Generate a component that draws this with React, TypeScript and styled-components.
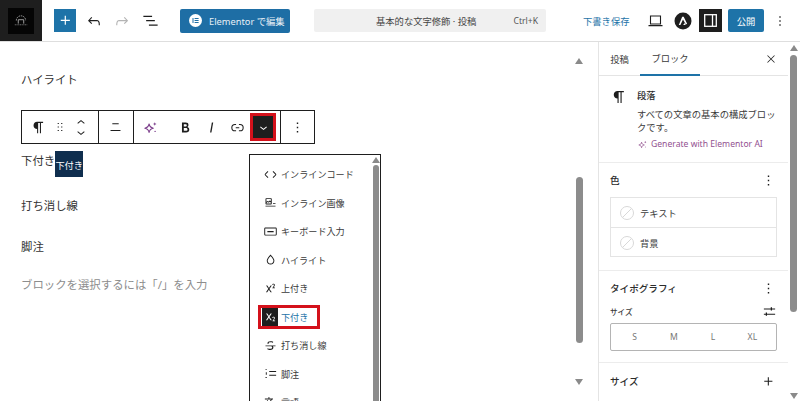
import React from "react";
import styled, { createGlobalStyle } from "styled-components";

const Global = createGlobalStyle`
  html, body { margin: 0; padding: 0; background: #fff; }
  body { font-family: "Noto Sans", "Noto Sans CJK JP", sans-serif; color: #2c2c2c; }
  * { box-sizing: border-box; }
`;

const CJK = `"Noto Sans", "Noto Sans CJK JP", sans-serif`;

const Page = styled.div`
  width: 800px; height: 401px; overflow: hidden; display: flex; flex-direction: column;
  font-family: ${CJK};
`;
const TopBar = styled.header`
  height: 42px; flex: none; display: flex; align-items: center; border-bottom: 1px solid #dedede;
`;
const LogoBox = styled.div`
  width: 42px; height: 41px; background: #1e1e1e; display: flex; align-items: center; justify-content: center;
`;
const LogoInner = styled.div`
  width: 26px; height: 26px; background: #050505; display: flex; align-items: center; justify-content: center;
`;
const Inserter = styled.div`
  width: 22px; height: 23px; margin-left: 12px; background: #1e73a8; color: #fff;
  display: flex; align-items: center; justify-content: center;
`;
const BarIcon = styled.div<{ $w: number; $dim?: boolean; $ml?: number }>`
  width: ${p => p.$w}px; margin-left: ${p => p.$ml ?? 0}px; display: flex; justify-content: center; align-items: center;
  color: ${p => (p.$dim ? "#b4b4b4" : "#1e1e1e")};
`;
const ElementorBtn = styled.div`
  width: 110px; height: 24px; margin-left: 16px; background: #1e6ea5; border-radius: 2px; color: #e8f0f6;
  display: flex; align-items: center; font-size: 9.3px; padding-left: 9px; gap: 7px;
`;
const ElementorDot = styled.div`
  width: 13px; height: 13px; border-radius: 50%; background: #fff; flex: none;
  display: flex; align-items: center; justify-content: center;
`;
const Command = styled.div`
  width: 232px; height: 23px; margin-left: 24px; background: #f0f0f0; border-radius: 2px;
  display: flex; align-items: center; font-size: 9.3px; color: #444; padding-left: 62px;
`;
const CommandKey = styled.span`
  margin-left: auto; margin-right: 8px; font-size: 8.6px; color: #555;
`;
const Draft = styled.div`
  margin-left: 37px; width: 47px; font-size: 9.3px; color: #1e73a8; white-space: nowrap;
`;
const DarkToggle = styled.div`
  width: 23px; height: 23px; margin-left: 7px; background: #1e1e1e; color: #fff;
  display: flex; align-items: center; justify-content: center;
`;
const Publish = styled.div`
  width: 36px; height: 23px; margin-left: 6px; background: #1e73a8; border-radius: 2px; color: #fff;
  font-size: 9.3px; display: flex; align-items: center; justify-content: center;
`;
const Body = styled.div`
  flex: 1; display: flex; min-height: 0;
`;
const Editor = styled.main`
  width: 599px; flex: none; display: flex; border-right: 1px solid #e4e4e4; position: relative;
`;
const Canvas = styled.div`
  flex: 1; padding: 28px 0 0 21px; font-size: 11.4px; color: #333;
`;
const Para = styled.p<{ $gap?: number; $muted?: boolean }>`
  margin: ${p => p.$gap ?? 0}px 0 0; line-height: 20px; color: ${p => (p.$muted ? "#8d8d8d" : "#333")};
`;
const Toolbar = styled.div`
  width: 294px; height: 34px; margin-top: 20px; border: 1px solid #1e1e1e; display: flex; color: #1e1e1e; background: #fff;
`;
const ToolGroup = styled.div<{ $w?: number }>`
  ${p => (p.$w ? `width:${p.$w}px;flex:none;border-right:1px solid #1e1e1e;` : "flex:1;")}
  display: flex; align-items: center; padding-left: 4px;
`;
const ToolBtn = styled.div<{ $w?: number; $ml?: number }>`
  width: ${p => p.$w ?? 24}px; margin-left: ${p => p.$ml ?? 0}px; height: 26px; flex: none;
  display: flex; align-items: center; justify-content: center;
`;
const MoverStack = styled.div`
  display: flex; flex-direction: column; align-items: center; gap: 5px;
`;
const MarkedBtn = styled.div`
  width: 26px; height: 28px; margin-left: 1px; flex: none; border: 3px solid #d4111b; background: #1e1e1e; color: #fff;
  display: flex; align-items: center; justify-content: center;
`;
const SubRow = styled.div`
  margin-top: 7px; display: flex; align-items: flex-start; height: 26px; line-height: 20px;
`;
const SubMark = styled.span`
  width: 28px; height: 26px; background: #0f2e4e; color: #fff; font-size: 9.2px; white-space: nowrap;
  display: flex; align-items: flex-end; justify-content: center; line-height: 23px;
`;
const ScrollCol = styled.div<{ $w: number; $pt: number; $mr?: number }>`
  width: ${p => p.$w}px; flex: none; margin-right: ${p => p.$mr ?? 0}px; padding-top: ${p => p.$pt}px;
  display: flex; flex-direction: column; align-items: center;
`;
const Arrow = styled.div<{ $down?: boolean; $mt?: number }>`
  width: 0; height: 0; flex: none; margin-top: ${p => p.$mt ?? 0}px;
  border-left: 4px solid transparent; border-right: 4px solid transparent;
  ${p => (p.$down ? "border-top: 6px solid #8a8a8a;" : "border-bottom: 6px solid #8a8a8a;")}
`;
const Thumb = styled.div<{ $w: number; $h: number; $mt: number }>`
  width: ${p => p.$w}px; height: ${p => p.$h}px; margin-top: ${p => p.$mt}px; flex: none;
  background: #8c8c8c; border-radius: 4px;
`;
const Popover = styled.div`
  position: absolute; left: 249px; top: 112px; width: 132px; height: 250px;
  background: #fff; border: 1px solid #1e1e1e; border-bottom: none; display: flex; overflow: hidden;
`;
const MenuList = styled.div`
  flex: 1; padding: 5px 0 0 8px;
`;
const MenuItem = styled.div`
  height: 28.5px; display: flex; align-items: center; font-size: 9.1px; color: #3a3a3a;
  white-space: nowrap;
`;
const MenuIcon = styled.div`
  width: 16px; height: 16px; margin-left: 4px; flex: none; display: flex; align-items: center; justify-content: center; color: #1e1e1e;
`;
const MenuLabel = styled.span`
  margin-left: 3px;
`;
const MarkedBox = styled.div`
  width: 62px; height: 24px; border: 3px solid #d4111b; display: flex; align-items: center; color: #1e73a8;
  padding-left: 1px;
`;
const MarkedIcon = styled.div`
  width: 16px; height: 18px; background: #1e1e1e; color: #fff; flex: none; display: flex; align-items: center; justify-content: center;
`;
const Sidebar = styled.aside`
  flex: 1; display: flex; min-width: 0;
`;
const Panel = styled.div`
  width: 189px; flex: none; font-size: 9.3px;
`;
const Tabs = styled.div`
  height: 34px; display: flex; align-items: center; border-bottom: 1px solid #e4e4e4;
`;
const Tab = styled.div<{ $active?: boolean }>`
  height: 33px; display: flex; align-items: center; justify-content: center; color: #3a3a3a;
  width: ${p => (p.$active ? 60 : 41)}px;
  ${p => (p.$active ? "border-bottom: 2px solid #1e73a8; margin-bottom: -1px; height: 34px;" : "")}
`;
const TabClose = styled.div`
  margin-left: auto; margin-right: 11px; display: flex; color: #1e1e1e;
`;
const Section = styled.section<{ $h: number; $last?: boolean }>`
  height: ${p => p.$h}px; padding: 0 11px; ${p => (p.$last ? "" : "border-bottom: 1px solid #ececec;")}
`;
const BlockCard = styled.div`
  display: flex; padding-top: 13px;
`;
const BlockIcon = styled.div`
  width: 18px; margin-top: -1px; margin-right: 9px; flex: none; color: #1e1e1e;
`;
const BlockText = styled.div`
  line-height: 13px; color: #3a3a3a; width: 142px;
`;
const BlockTitle = styled.div`
  font-weight: 500; color: #2c2c2c; margin-bottom: 6px;
`;
const AiLink = styled.div`
  margin-top: 4px; color: #92508f; display: flex; align-items: center; gap: 3px; white-space: nowrap; font-size: 8.6px;
`;
const SectionHead = styled.div<{ $pt: number }>`
  display: flex; align-items: center; justify-content: space-between; padding-top: ${p => p.$pt}px;
  height: ${p => p.$pt + 16}px; font-size: 9.6px; font-weight: 500; color: #2c2c2c;
`;
const HeadIcon = styled.div`
  display: flex; color: #1e1e1e;
`;
const ColorList = styled.div`
  margin-top: 9px; border: 1px solid #e4e4e4; height: 60px; width: 167px;
`;
const ColorRow = styled.div<{ $line?: boolean }>`
  height: ${p => (p.$line ? 30 : 29)}px; display: flex; align-items: center; padding-left: 9px; gap: 6px; color: #3a3a3a;
  ${p => (p.$line ? "border-bottom: 1px solid #e4e4e4;" : "")}
`;
const SizeLabelRow = styled.div`
  margin-top: 7px; height: 16px; display: flex; align-items: center; justify-content: space-between; font-size: 7.6px; color: #3a3a3a; font-weight: 500; padding-top: 1px;
`;
const Segments = styled.div`
  margin-top: 4px; width: 167px; height: 28px; border: 1px solid #b4b4b4; border-radius: 2px;
  display: grid; grid-template-columns: repeat(4, 1fr); align-items: center; justify-items: center; padding: 0 4px;
  font-size: 8.6px; color: #777;
`;

const P = ({ s = 24, d }: { s?: number; d: string }) => (
  <svg width={s} height={s} viewBox="0 0 24 24" fill="currentColor"><path d={d} /></svg>
);
const ic = {
  plus: "M11 12.5V17.5H12.5V12.5H17.5V11H12.5V6H11V11H6V12.5H11Z",
  undo: "M18.3 11.7c-.6-.6-1.4-.9-2.3-.9H6.7l2.9-3.3-1.1-1-4.5 5L8.5 16l1-1-2.7-2.7H16c.5 0 .9.2 1.3.5 1 1 1 3.4 1 4.5v.3h1.5v-.2c0-1.5 0-4.3-1.5-5.7z",
  redo: "M15.6 6.5l-1.1 1 2.9 3.3H8c-.9 0-1.7.3-2.3.9-1.4 1.5-1.4 4.2-1.4 5.6v.2h1.5v-.3c0-1.1 0-3.5 1-4.5.3-.3.7-.5 1.3-.5h9.2L14.5 15l1.1 1.1 4.6-4.6-4.6-5z",
  list: "M3 6h11v1.5H3V6Zm3.5 5.5h11V13h-11v-1.5ZM21 17H10v1.5h11V17Z",
  para: "m9.99609 14v-.2251l.00391.0001v6.225h1.5v-14.5h2.5v14.5h1.5v-14.5h3v-1.5h-8.50391c-2.76142 0-5 2.23858-5 5 0 2.7614 2.23858 5 5 5z",
  drag: "M8 7h2V5H8v2zm0 6h2v-2H8v2zm0 6h2v-2H8v2zm6-14v2h2V5h-2zm0 8h2v-2h-2v2zm0 6h2v-2h-2v2z",
  up: "M6.5 12.4L12 8l5.5 4.4-.9 1.2L12 10l-4.5 3.6-1-1.2z",
  down: "M17.5 11.6L12 16l-5.5-4.4.9-1.2L12 14l4.5-3.6 1 1.2z",
  bold: "M14.7 11.3c1-.6 1.5-1.6 1.5-3 0-2.3-1.3-3.4-4-3.4H7v14h5.8c1.4 0 2.5-.3 3.3-1 .8-.7 1.2-1.7 1.2-2.9.1-1.9-.8-3.1-2.6-3.7zm-5.1-4h2.3c.6 0 1.1.1 1.4.4.3.3.5.7.5 1.2s-.2 1-.5 1.2c-.3.3-.8.4-1.4.4H9.6V7.3zm4.6 9c-.4.3-1 .4-1.7.4H9.6v-3.9h2.9c.7 0 1.3.2 1.7.5.4.3.6.8.6 1.5s-.2 1.2-.6 1.5z",
  italic: "M12.5 5L10 19h1.9l2.5-14z",
  link: "M10 17.389H8.444A5.194 5.194 0 1 1 8.444 7H10v1.5H8.444a3.694 3.694 0 0 0 0 7.389H10v1.5ZM14 7h1.556a5.194 5.194 0 0 1 0 10.39H14v-1.5h1.556a3.694 3.694 0 0 0 0-7.39H14V7Zm-4.5 6h5v-1.5h-5V13Z",
  more: "M13 19h-2v-2h2v2zm0-6h-2v-2h2v2zm0-6h-2V5h2v2z",
  close: "m13.06 12 6.47-6.47-1.06-1.06L12 10.94 5.53 4.47 4.47 5.53 10.94 12l-6.47 6.47 1.06 1.06L12 13.06l6.47 6.47 1.06-1.06L13.06 12Z",
  code: "M20.8 10.7l-4.3-4.3-1.1 1.1 4.3 4.3c.1.1.1.3 0 .4l-4.3 4.3 1.1 1.1 4.3-4.3c.7-.8.7-1.9 0-2.6zM4.2 11.8l4.3-4.3-1-1-4.3 4.3c-.7.7-.7 1.8 0 2.5l4.3 4.3 1.1-1.1-4.3-4.3c-.2-.1-.2-.3-.1-.4z",
  image: "M4 18.5h16V17H4v1.5zM16 13v1.5h4V13h-4zM5.1 15h7.8c.6 0 1.1-.5 1.1-1.1V6.1c0-.6-.5-1.1-1.1-1.1H5.1C4.5 5 4 5.5 4 6.1v7.8c0 .6.5 1.1 1.1 1.1zm.4-8.5h7V10l-1-1c-.3-.3-.8-.3-1 0l-1.6 1.5-1.2-.7c-.3-.2-.6-.2-.9 0l-1.3 1V6.5zm0 6.1l1.8-1.3 1.3.8c.3.2.7.2.9-.1l1.5-1.4 1.5 1.4v1.5h-7v-.9z",
  keyboard: "M20 5.5H4c-1.1 0-2 .9-2 2v9c0 1.1.9 2 2 2h16c1.1 0 2-.9 2-2v-9c0-1.1-.9-2-2-2zm.5 11c0 .3-.2.5-.5.5H4c-.3 0-.5-.2-.5-.5v-9c0-.3.2-.5.5-.5h16c.3 0 .5.2.5.5v9zM7 11h10v2H7v-2z",
  drop: "M17.2 10.9c-.5-1-1.2-2.1-2.1-3.2-.6-.9-1.3-1.7-2.1-2.6L12 4l-1 1.1c-.6.9-1.3 1.7-2 2.6-.8 1.2-1.5 2.3-2 3.2-.6 1.2-1 2.2-1 3 0 3.4 2.7 6.1 6.1 6.1s6.1-2.7 6.1-6.1c0-.8-.3-1.8-1-3zm-5.1 7.6c-2.5 0-4.6-2.1-4.6-4.6 0-.3.1-1 .8-2.3.5-.9 1.1-1.9 2-3.1.7-.9 1.3-1.7 1.8-2.3.7.8 1.3 1.6 1.8 2.3.8 1.1 1.5 2.2 2 3.1.7 1.3.8 2 .8 2.3 0 2.5-2.1 4.6-4.6 4.6z",
  sup: "M16.9 10.3l.8-1.3c.4-.6.7-1.2.9-1.6.2-.4.3-.8.3-1.2 0-.3-.1-.7-.2-1-.2-.2-.4-.4-.7-.6-.3-.2-.6-.3-1-.3s-.8.1-1.1.2c-.3.1-.7.3-1 .6l.1 1.3c.3-.3.5-.5.8-.6s.6-.2.9-.2c.3 0 .5.1.7.2.2.2.2.4.2.7 0 .3-.1.5-.2.8-.1.3-.4.7-.8 1.3l-1.8 2.8h4.3v-1.2h-2.2zm-2.8-3.1h-2L9.5 11 6.9 7.2h-2l3.6 5.3L4.7 18h2l2.7-4 2.7 4h2l-3.8-5.3 3.8-5.5z",
  sub: "M16.9 18.3l.8-1.2c.4-.6.7-1.2.9-1.6.2-.4.3-.8.3-1.2 0-.3-.1-.7-.2-1-.1-.3-.4-.5-.6-.7-.3-.2-.6-.3-1-.3s-.8.1-1.1.2c-.3.1-.7.3-1 .6l.2 1.3c.3-.3.5-.5.8-.6s.6-.2.9-.2c.3 0 .5.1.7.2.2.2.2.4.2.7 0 .3-.1.5-.2.8-.1.3-.4.7-.8 1.3L15 19.4h4.3v-1.2h-2.4v.1zM14.1 7.2h-2L9.5 11 6.9 7.2h-2l3.6 5.3L4.7 18h2l2.7-4 2.7 4h2l-3.8-5.3 3.8-5.5z",
  strike: "M9.1 9v-.5c0-.6.2-1.1.7-1.4.5-.3 1.2-.5 2-.5.7 0 1.4.1 2.1.3.7.2 1.4.5 2.1.9l.2-1.9c-.6-.3-1.2-.5-1.9-.7-.8-.1-1.6-.2-2.4-.2-1.5 0-2.7.3-3.6 1-.8.7-1.2 1.5-1.2 2.6V9h2zM20 12H4v1h8.3c.3.1.6.2.8.3.5.2.9.5 1.1.8.3.3.4.7.4 1.2 0 .7-.2 1.1-.8 1.5-.5.3-1.2.5-2.1.5-.8 0-1.6-.1-2.4-.3-.8-.2-1.5-.5-2.2-.8L7 18.1c.5.2 1.2.4 2 .6.8.2 1.6.3 2.4.3 1.7 0 3-.3 3.9-1 .9-.7 1.3-1.6 1.3-2.8 0-.9-.2-1.7-.7-2.2H20v-1z",
  foot: "M4 5h2v1.5H4zM4.5 10H6v4H4.5zM4 17.5h2V19H4zM10 8h11v1.6H10zM10 14h11v1.6H10z",
  lang: "M17.5 10h-1.7l-3.7 10.5h1.7l.9-2.6h3.9l.9 2.6h1.7L17.5 10zm-2.2 6.6 1.4-4 1.4 4h-2.8zm-4.8-3.8c1.6-1.8 2.9-3.6 3.7-5.7H16V5.5h-5.8V3H8.8v2.5H3v1.5h9.6c-.7 1.6-1.8 3.1-3.1 4.6C8.6 10.5 8 9.5 7.6 8.5H6.1c.4 1.3 1.2 2.6 2.3 3.9l-4.2 4 1.1 1.1 4.1-4 2.3 2.3.6-1.5-1.8-1.5z",
  sliders: "M3 7h11v1.6H3zM14 5h2v5.5h-2zM16 7h5v1.6h-5zM3 15.4h3v1.6H3zM6 13.4h2v5.5H6zM8 15.4h13v1.6H8z",
  align: "M7.5 6h9v1.4h-9zM5 15.5h14v1.4H5z",
};

const Sparkle = ({ s = 18, c = "#7d3f8c" }: { s?: number; c?: string }) => (
  <svg width={s} height={s} viewBox="0 0 24 24" fill="none" stroke={c} strokeWidth="1.6" strokeLinejoin="round">
    <path d="M10 7c.6 3.6 2.4 5.4 6 6-3.6.6-5.4 2.4-6 6-.6-3.6-2.4-5.4-6-6 3.6-.6 5.4-2.4 6-6Z" />
    <path d="M18 4.5l.8 1.7 1.7.8-1.7.8-.8 1.7-.8-1.7-1.7-.8 1.7-.8Z" fill={c} stroke="none" />
    <circle cx="18.5" cy="17.5" r="1" fill={c} stroke="none" />
  </svg>
);

const NoColor = () => (
  <svg width="14" height="14" viewBox="0 0 14 14" fill="none" stroke="#d8d8d8" strokeWidth="1">
    <circle cx="7" cy="7" r="6.5" />
    <path d="M2.5 11.5l9-9" />
  </svg>
);

const items: { icon: string; label: string; marked?: boolean }[] = [
  { icon: ic.code, label: "インラインコード" },
  { icon: ic.image, label: "インライン画像" },
  { icon: ic.keyboard, label: "キーボード入力" },
  { icon: ic.drop, label: "ハイライト" },
  { icon: ic.sup, label: "上付き" },
  { icon: ic.sub, label: "下付き", marked: true },
  { icon: ic.strike, label: "打ち消し線" },
  { icon: ic.foot, label: "脚注" },
  { icon: ic.lang, label: "言語" },
];

export default function App() {
  return (
    <Page>
      <Global />
      <TopBar>
        <LogoBox>
          <LogoInner>
            <svg width="14" height="11" viewBox="0 0 18 14" fill="none" stroke="#a8a8a8" strokeWidth="1.2">
              <path d="M3 7a6 6 0 0 1 12 0" strokeDasharray="2 1" />
              <path d="M5.5 11V6h7v5" />
              <path d="M1 12.5h16" strokeWidth=".8" strokeDasharray="1.5 .7" />
            </svg>
          </LogoInner>
        </LogoBox>
        <Inserter><P s={19} d={ic.plus} /></Inserter>
        <BarIcon $w={28} $ml={4}><P s={18} d={ic.undo} /></BarIcon>
        <BarIcon $w={28} $dim><P s={18} d={ic.redo} /></BarIcon>
        <BarIcon $w={28}><P s={19} d={ic.list} /></BarIcon>
        <ElementorBtn>
          <ElementorDot>
            <svg width="7" height="7" viewBox="0 0 7 7" fill="#1e6ea5">
              <path d="M0.5 1h1v5h-1zM2.6 1h4v1h-4zM2.6 3h4v1h-4zM2.6 5h4v1h-4z" />
            </svg>
          </ElementorDot>
          Elementor で編集
        </ElementorBtn>
        <Command>
          基本的な文字修飾 · 投稿
          <CommandKey>Ctrl+K</CommandKey>
        </Command>
        <Draft>下書き保存</Draft>
        <BarIcon $w={20} $ml={15}>
          <svg width="15" height="12" viewBox="0 0 15 12" fill="none" stroke="#1e1e1e" strokeWidth="1.1">
            <path d="M2.5 1h10v8h-10zM0.5 10.6h14" />
          </svg>
        </BarIcon>
        <BarIcon $w={18} $ml={9}>
          <svg width="18" height="18" viewBox="0 0 18 18">
            <circle cx="9" cy="9" r="8.5" fill="#1e1e1e" />
            <path d="M4.8 13l3.4-8.2h1.5l3.4 7-1.3.7L9 7.6 6.4 13z M9.2 13l1.4-2 1 2z" fill="#fff" />
          </svg>
        </BarIcon>
        <DarkToggle>
          <svg width="13" height="13" viewBox="0 0 13 13" fill="none" stroke="#fff" strokeWidth="1.3">
            <rect x=".7" y=".7" width="11.6" height="11.6" />
            <path d="M8.5 .7v11.6" />
          </svg>
        </DarkToggle>
        <Publish>公開</Publish>
        <BarIcon $w={16} $ml={8}><P s={18} d={ic.more} /></BarIcon>
      </TopBar>
      <Body>
        <Editor>
          <Canvas>
            <Para>ハイライト</Para>
            <Toolbar>
              <ToolGroup $w={77}>
                <ToolBtn><P s={17} d={ic.para} /></ToolBtn>
                <ToolBtn $w={20}><P s={14} d={ic.drag} /></ToolBtn>
                <ToolBtn $w={22}>
                  <MoverStack>
                    <svg width="8" height="6" viewBox="6 7 12 8" fill="currentColor"><path d={ic.up} /></svg>
                    <svg width="8" height="6" viewBox="6 9 12 8" fill="currentColor"><path d={ic.down} /></svg>
                  </MoverStack>
                </ToolBtn>
              </ToolGroup>
              <ToolGroup $w={35}>
                <ToolBtn $w={24}><P s={17} d={ic.align} /></ToolBtn>
              </ToolGroup>
              <ToolGroup $w={147}>
                <ToolBtn><Sparkle s={17} /></ToolBtn>
                <ToolBtn $ml={11}><P s={17} d={ic.bold} /></ToolBtn>
                <ToolBtn $ml={2}><P s={17} d={ic.italic} /></ToolBtn>
                <ToolBtn $ml={2}><P s={17} d={ic.link} /></ToolBtn>
                <MarkedBtn><P s={15} d={ic.down} /></MarkedBtn>
              </ToolGroup>
              <ToolGroup>
                <ToolBtn><P s={17} d={ic.more} /></ToolBtn>
              </ToolGroup>
            </Toolbar>
            <SubRow>
              下付き<SubMark>下付き</SubMark>
            </SubRow>
            <Para $gap={19}>打ち消し線</Para>
            <Para $gap={21}>脚注</Para>
            <Para $gap={18} $muted>ブロックを選択するには「/」を入力</Para>
          </Canvas>
          <ScrollCol $w={8} $mr={15} $pt={16}>
            <Arrow />
            <Thumb $w={7} $h={166} $mt={113} />
            <Arrow $down $mt={36} />
          </ScrollCol>
          <Popover>
            <MenuList>
              {items.map(it =>
                it.marked ? (
                  <MenuItem key={it.label}>
                    <MarkedBox>
                      <MarkedIcon><P s={15} d={it.icon} /></MarkedIcon>
                      <MenuLabel>{it.label}</MenuLabel>
                    </MarkedBox>
                  </MenuItem>
                ) : (
                  <MenuItem key={it.label}>
                    <MenuIcon><P s={15} d={it.icon} /></MenuIcon>
                    <MenuLabel>{it.label}</MenuLabel>
                  </MenuItem>
                )
              )}
            </MenuList>
            <ScrollCol $w={9} $pt={2}>
              <Arrow />
              <Thumb $w={6} $h={240} $mt={2} />
            </ScrollCol>
          </Popover>
        </Editor>
        <Sidebar>
          <Panel>
            <Tabs>
              <Tab>投稿</Tab>
              <Tab $active>ブロック</Tab>
              <TabClose><P s={12} d={ic.close} /></TabClose>
            </Tabs>
            <Section $h={87}>
              <BlockCard>
                <BlockIcon><P s={18} d={ic.para} /></BlockIcon>
                <BlockText>
                  <BlockTitle>段落</BlockTitle>
                  すべての文章の基本の構成ブロックです。
                  <AiLink><Sparkle s={11} c="#92508f" />Generate with Elementor AI</AiLink>
                </BlockText>
              </BlockCard>
            </Section>
            <Section $h={108}>
              <SectionHead $pt={9}>
                色
                <HeadIcon><P s={17} d={ic.more} /></HeadIcon>
              </SectionHead>
              <ColorList>
                <ColorRow $line><NoColor />テキスト</ColorRow>
                <ColorRow><NoColor />背景</ColorRow>
              </ColorList>
            </Section>
            <Section $h={92}>
              <SectionHead $pt={9}>
                タイポグラフィ
                <HeadIcon><P s={17} d={ic.more} /></HeadIcon>
              </SectionHead>
              <SizeLabelRow>
                サイズ
                <HeadIcon><P s={15} d={ic.sliders} /></HeadIcon>
              </SizeLabelRow>
              <Segments>
                <span>S</span><span>M</span><span>L</span><span>XL</span>
              </Segments>
            </Section>
            <Section $h={38} $last>
              <SectionHead $pt={10}>
                サイズ
                <HeadIcon><P s={17} d={ic.plus} /></HeadIcon>
              </SectionHead>
            </Section>
          </Panel>
          <ScrollCol $w={11} $pt={3}>
            <Arrow />
            <Thumb $w={7} $h={257} $mt={4} />
            <Arrow $down $mt={81} />
          </ScrollCol>
        </Sidebar>
      </Body>
    </Page>
  );
}
